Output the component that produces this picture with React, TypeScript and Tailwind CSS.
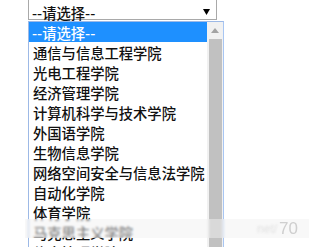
export default function App() {
  const items = [
    "通信与信息工程学院",
    "光电工程学院",
    "经济管理学院",
    "计算机科学与技术学院",
    "外国语学院",
    "生物信息学院",
    "网络空间安全与信息法学院",
    "自动化学院",
    "体育学院",
    "马克思主义学院",
    "信息管理学院",
  ];
  return (
    <div className="relative h-[247px] w-[309px] overflow-hidden bg-white pl-[28px] font-['Noto_Sans_CJK_SC','Microsoft_YaHei',sans-serif] text-[14.3px] font-medium text-[#111]">
      {/* select box */}
      <div className="flex h-[20px] w-[189px] items-start border border-t-0 border-[#a9a9a9] pl-[3px]">
        <span className="mt-[3px] h-[16px] leading-[20px]">--请选择--</span>
        <svg className="ml-auto mr-[6px] mt-[9px]" width="7" height="6" viewBox="0 0 7 6">
          <path d="M0 0 H7 L3.5 6 Z" fill="#000" />
        </svg>
      </div>
      {/* dropdown list */}
      <div className="mt-[1px] flex h-[260px] w-[196px] border border-[#9db9e6] border-r-[#a8c6f3]">
        <div className="flex w-[178px] flex-col">
          <div className="h-[20px] bg-[#1e90ff] pl-[3px] pt-[1px] leading-[20px] text-white">--请选择--</div>
          {items.map((t) => (
            <div key={t} className="h-[20px] whitespace-nowrap pl-[4px] pt-[1px] leading-[20px]">
              {t}
            </div>
          ))}
        </div>
        <div className="flex w-[16px] flex-col bg-[#f1f1f1]">
          <div className="flex h-[17px] items-center justify-center">
            <svg width="8" height="5" viewBox="0 0 8 5">
              <path d="M0 5 L4 0 L8 5 Z" fill="#a3a3a3" />
            </svg>
          </div>
          <div className="ml-[2px] mr-[1px] flex-1 bg-[#c1c1c1]" />
        </div>
      </div>
      {/* watermark band */}
      <div className="absolute left-[25px] top-[219px] flex h-[19px] w-[284px] items-center justify-end bg-[#f2f2f2]/50 pr-[11px] font-['Liberation_Sans',sans-serif] text-[17px] font-normal text-[#cfcfcf] backdrop-blur-[1px]">
        <span className="mr-[2px] text-[12px] text-[#e2e2e2] blur-[1px]">net/</span>
        <span>70</span>
      </div>
    </div>
  );
}
